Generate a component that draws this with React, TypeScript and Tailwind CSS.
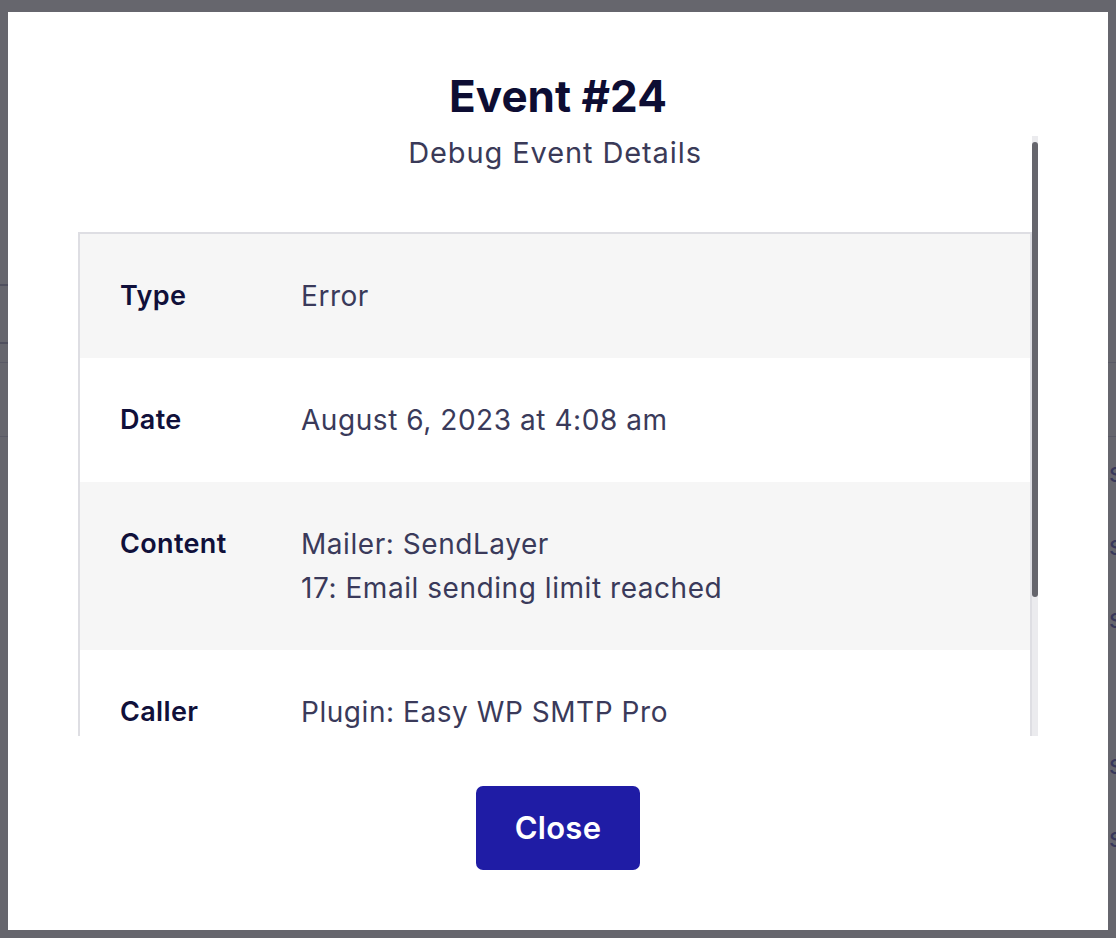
import React from 'react';

const rows = [
    { label: 'Type', lines: ['Error'], shaded: true },
    { label: 'Date', lines: ['August 6, 2023 at 4:08 am'], shaded: false },
    { label: 'Content', lines: ['Mailer: SendLayer', '17: Email sending limit reached'], shaded: true },
    { label: 'Caller', lines: ['Plugin: Easy WP SMTP Pro'], shaded: false },
    { label: 'Backtrace', lines: ['#0 wp-includes/class-wp-hook.php', '#1 wp-includes/plugin.php'], shaded: true },
];

// rows of the page sitting behind the overlay, only their last letter peeks out
const backdropRows = ['Details', 'Details', 'Details', '', 'Details', 'Details'];

export default function App() {
    return (
        <div className="relative h-[938px] w-[1116px] overflow-hidden bg-[#66666d] font-['Inter',sans-serif]">
            {/* Page behind the modal */}
            <div className="flex flex-col">
                <div className="h-[284px]" />
                <div className="h-[2px] w-[60px] bg-[#50505e]" />
                <div className="h-[56px]" />
                <div className="h-[2px] w-[60px] bg-[#50505e]" />
                <div className="h-[18px]" />
                <div className="h-[1px] w-full bg-[#5a5a66]" />
                <div className="h-[73px]" />
                <div className="h-[1px] w-full bg-[#5a5a66]" />
                {backdropRows.map((word, i) => (
                    <div key={i} className="flex h-[73px] items-center justify-end">
                        <span className="mr-[-7px] text-[27px] text-[#38385a]">{word}</span>
                    </div>
                ))}
            </div>

            {/* Modal */}
            <div className="absolute left-[8px] top-[12px] flex h-[918px] w-[1100px] flex-col items-center bg-white">
                <h1 className="pt-[58px] text-[44px] font-bold leading-[52px] text-[#0d0d33]">Event #24</h1>

                <div className="mt-[14px] flex h-[600px] w-full px-[70px]">
                    <div className="flex min-w-0 flex-1 flex-col overflow-hidden">
                        <p className="text-center text-[29px] leading-[34px] tracking-[0.9px] text-[#3a3a58]">
                            Debug Event Details
                        </p>

                        <div className="mt-[62px] border-2 border-[#dedee3]">
                            {rows.map((row) => (
                                <div
                                    key={row.label}
                                    className={`flex px-[40px] py-[40px] ${row.shaded ? 'bg-[#f6f6f6]' : 'bg-white'}`}
                                >
                                    <div className="w-[181px] shrink-0 text-[27px] font-semibold leading-[44px] tracking-[0.35px] text-[#10103a]">
                                        {row.label}
                                    </div>
                                    <div className="text-[28px] leading-[44px] tracking-[0.55px] text-[#3a3a5a]">
                                        {row.lines.map((line) => (
                                            <div key={line}>{line}</div>
                                        ))}
                                    </div>
                                </div>
                            ))}
                        </div>
                    </div>

                    {/* Scrollbar */}
                    <div className="w-[6px] shrink-0 bg-[#ebebee] pt-[6px]">
                        <div className="h-[455px] rounded-full bg-[#66666d]" />
                    </div>
                </div>

                <button className="mt-[50px] h-[84px] w-[164px] rounded-[7px] bg-[#1f1ca5] text-[31px] font-semibold tracking-[0.3px] text-white">
                    Close
                </button>
            </div>
        </div>
    );
}
